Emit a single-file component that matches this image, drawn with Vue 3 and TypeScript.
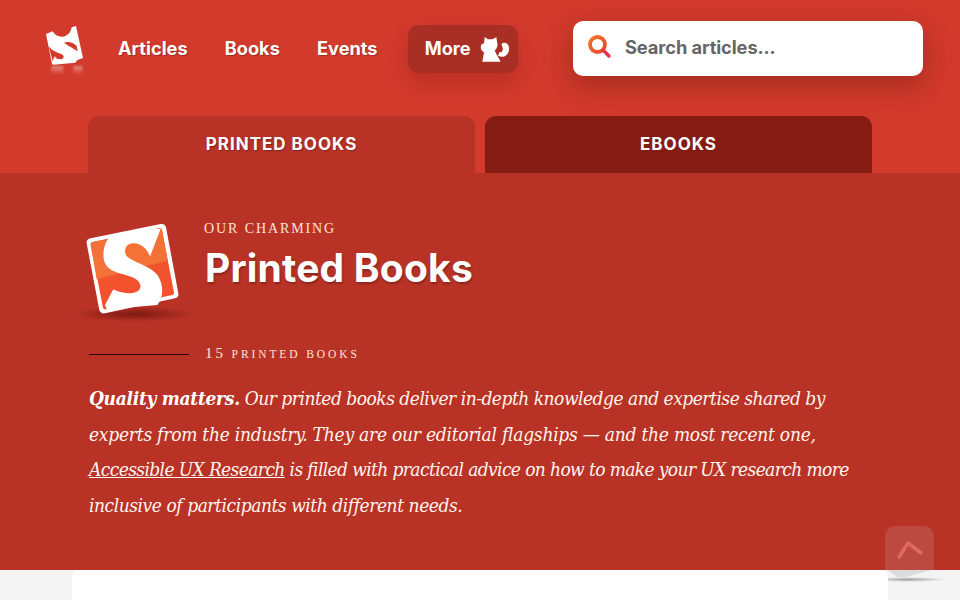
<script setup lang="ts">
const navItems: string[] = ['Articles', 'Books', 'Events']
</script>

<template>
  <div class="page">
    <header class="top">
      <div class="bar">
        <a class="logo" aria-label="Smashing Magazine">
          <svg width="50" height="62" viewBox="0 0 150 186">
            <defs>
              <linearGradient id="fade" x1="0" y1="0" x2="0" y2="1">
                <stop offset="0" stop-color="#fff" stop-opacity=".4" />
                <stop offset="1" stop-color="#fff" stop-opacity="0" />
              </linearGradient>
              <filter id="soft" x="-20%" y="-20%" width="140%" height="140%">
                <feGaussianBlur stdDeviation="2.500" />
              </filter>
            </defs>
            <g filter="url(#soft)">
              <rect x="34" y="132" width="36" height="26" fill="url(#fade)" />
              <rect x="100" y="132" width="28" height="26" fill="url(#fade)" />
            </g>
            <path d="M18 36L38 28C44 40 56 46 70 44C82 41 92 34 95 16L108 12L129 108L112 114L106 122L40 128L36 125Z" fill="#fff" />
            <path d="M72 62C82 58 100 60 110 72L113 88C100 78 84 72 72 62Z" fill="#d23a2c" />
            <path d="M26 72C35 88 55 92 68 98C74 104 70 112 60 112C52 112 46 108 44 102L38 118Z" fill="#d23a2c" />
          </svg>
        </a>
        <nav class="nav">
          <a v-for="item in navItems" :key="item" class="nav-link">{{ item }}</a>
          <a class="more">
            <span>More</span>
            <svg width="30" height="28" viewBox="0 0 90 84">
              <path d="M14 6L24 13H37L49 7L52 25C54 32 50 43 44 47L52 62L62 80H7L12 52C2 48 0 35 5 28L12 25Z" fill="#fff" />
              <path d="M64 28C76 16 90 30 87 45C84 64 68 70 54 62L58 52C66 52 70 46 68 38Z" fill="#fff" />
            </svg>
          </a>
        </nav>
        <div class="search">
          <svg width="24" height="24" viewBox="0 0 24 24">
            <defs>
              <linearGradient id="lens" x1="0" y1="0" x2="1" y2="1">
                <stop offset="0" stop-color="#f0742c" />
                <stop offset="1" stop-color="#e9482f" />
              </linearGradient>
            </defs>
            <circle cx="9.500" cy="9.500" r="7.500" fill="none" stroke="url(#lens)" stroke-width="3.800" />
            <path d="M15.500 15.500l5.500 5.500" stroke="#e8344a" stroke-width="3.500" stroke-linecap="round" />
          </svg>
          <span>Search articles...</span>
        </div>
      </div>
      <div class="tabs">
        <a class="tab active">PRINTED BOOKS</a>
        <a class="tab">EBOOKS</a>
      </div>
    </header>

    <main class="hero">
      <div class="hero-head">
        <div class="badge">
          <svg width="130" height="120" viewBox="0 0 390 360">
            <path d="M62 85L272 42Q285 40 288 52L325 250Q327 262 315 265L105 310Q92 312 88 300L50 100Q48 88 62 85Z" fill="#fff" />
            <path d="M68 96L268 55Q275 54 276 60L312 248Q313 254 307 255L109 298Q101 299 99 293L62 104Q61 98 68 96Z" fill="#f2522e" />
            <path d="M68 96L268 55Q275 54 276 60L293 152L80 208L62 104Q61 98 68 96Z" fill="#f47238" />
            <path d="M118 82L245 58L272 56L240 140C232 118 215 100 190 100C170 100 160 118 168 135C180 155 240 165 264 197C282 228 280 262 262 285L110 298L105 285L130 238C150 250 185 255 205 242C218 230 210 212 190 203C160 190 120 190 105 160C95 135 102 100 118 82Z" fill="#fff" />
          </svg>
        </div>
        <div class="titles">
          <p class="kicker">OUR CHARMING</p>
          <h1>Printed Books</h1>
        </div>
      </div>
      <div class="count">
        <span class="rule"></span>
        <span class="count-text"><b>15</b> PRINTED BOOKS</span>
      </div>
      <p class="intro">
        <span class="line l1"><strong>Quality matters.</strong> Our printed books deliver in-depth knowledge and expertise shared by</span>
        <span class="line l2">experts from the industry. They are our editorial flagships — and the most recent one,</span>
        <span class="line l3"><u>Accessible UX Research</u> is filled with practical advice on how to make your UX research more</span>
        <span class="line">inclusive of participants with different needs.</span>
      </p>
    </main>

    <section class="below"><div class="sheet"></div></section>

    <a class="up" aria-label="Back to top">
      <svg width="28" height="20" viewBox="0 0 28 20">
        <path d="M3 17L12 3L25 13" fill="none" stroke="#de6a5f" stroke-width="3.500" stroke-linecap="round" stroke-linejoin="round" />
      </svg>
    </a>
  </div>
</template>

<style>
html, body { margin: 0; overflow: hidden; }
</style>

<style scoped>
.page {
  position: relative;
  width: 960px;
  height: 600px;
  overflow: hidden;
  background: #f4f4f4;
  font-family: Inter, "Liberation Sans", sans-serif;
  color: #fff;
}
.top {
  height: 173px;
  background: #d23a2c;
  display: flex;
  flex-direction: column;
}
.bar {
  height: 116px;
  display: flex;
  padding: 22px 37px 0 40px;
  box-sizing: border-box;
}
.logo { width: 50px; height: 62px; }
.logo svg { display: block; }
.nav {
  display: flex;
  align-items: flex-start;
  margin-left: 28px;
  margin-top: -1px;
  flex: 1;
}
.nav-link {
  font-size: 18.200px;
  font-weight: 700;
  line-height: 22px;
  margin-top: 16px;
  margin-right: 37.200px;
  text-shadow: 1px 1px 1px rgba(0,0,0,.25);
}
.more {
  display: flex;
  align-items: center;
  gap: 9px;
  width: 110px;
  height: 48px;
  box-sizing: border-box;
  margin-top: 4px;
  margin-left: -7px;
  padding-left: 17px;
  border-radius: 11px;
  background: #a92f24;
  box-shadow: 0 10px 20px rgba(120,20,10,.25);
  font-size: 18.200px;
  font-weight: 700;
}
.more span { position: relative; top: -1px; }
.search {
  width: 350px;
  height: 55px;
  margin-top: -1px;
  box-sizing: border-box;
  display: flex;
  align-items: center;
  gap: 13px;
  padding-left: 15px;
  padding-bottom: 3px;
  background: #fff;
  border-radius: 10px;
  box-shadow: 0 10px 28px rgba(90,20,10,.38);
  color: #666;
  font-size: 18.300px;
  font-weight: 700;
  letter-spacing: -.1px;
}
.tabs {
  display: flex;
  gap: 10px;
  padding-left: 88px;
}
.tab {
  width: 387px;
  height: 57px;
  box-sizing: border-box;
  padding-top: 18px;
  text-align: center;
  border-radius: 11px 11px 0 0;
  background: #841c13;
  font-size: 17px;
  line-height: 21px;
  font-weight: 700;
  letter-spacing: 1px;
}
.tab.active {
  background: #b93226;
  text-shadow: 1px 1px 1px rgba(0,0,0,.3);
}
.hero {
  height: 397px;
  box-sizing: border-box;
  background: #b93226;
  padding: 40px 0 0 89px;
}
.hero-head { display: flex; height: 129px; }
.badge {
  position: relative;
  width: 130px;
  height: 120px;
  margin-left: -19px;
  margin-right: 4px;
  margin-top: -3px;
}
.badge::after {
  content: "";
  position: absolute;
  left: 2px;
  top: 96px;
  width: 124px;
  height: 16px;
  background: radial-gradient(ellipse at center, rgba(105,18,10,.75), rgba(105,18,10,0) 70%);
}
.badge svg { position: relative; z-index: 1; display: block; }
.kicker {
  margin: 8px 0 0;
  font: 400 14px/16px "Liberation Serif", serif;
  letter-spacing: 1.900px;
  color: #fde4d8;
}
h1 {
  margin: 8px 0 0 1px;
  font-size: 39px;
  line-height: 46px;
  font-weight: 700;
  letter-spacing: .2px;
  text-shadow: 1px 2px 2px rgba(0,0,0,.25);
}
.count {
  display: flex;
  align-items: center;
  gap: 16px;
  height: 24px;
}
.rule { width: 100px; height: 1px; background: #2a0805; }
.count-text {
  font: 400 11.500px/16px "Liberation Serif", serif;
  letter-spacing: 2.900px;
  color: #fde4d8;
  margin-bottom: 2px;
}
.count-text b { font-weight: 400; font-size: 15px; }
.intro {
  width: 800px;
  margin: 15px 0 0;
  font: italic 400 19px/35.500px "DejaVu Serif Condensed", "Liberation Serif", serif;
  font-stretch: condensed;
  letter-spacing: -.45px;
  color: #fff5ee;
  white-space: nowrap;
}
.line { display: block; }
.l1 { letter-spacing: -.5px; }
.l2 { letter-spacing: -.24px; }
.l3 { letter-spacing: -.62px; }
.intro strong { font-weight: 700; color: #fff; letter-spacing: -.3px; }
.below {
  height: 30px;
  padding: 0 72px;
}
.sheet { height: 100%; background: #fff; border-radius: 8px 8px 0 0; }
.up {
  position: absolute;
  left: 885px;
  top: 526px;
  width: 49px;
  height: 44px;
  border-radius: 10px 10px 0 0;
  background: #bd4a41;
  display: flex;
  align-items: center;
  justify-content: center;
  padding-top: 4px;
  box-sizing: border-box;
}
.up::before {
  content: "";
  position: absolute;
  left: 3px;
  right: 2px;
  top: 44px;
  height: 7px;
  background: #dcdcdc;
  clip-path: polygon(0 0, 100% 0, 40% 100%, 20% 100%);
}
.up::after {
  content: "";
  position: absolute;
  left: 3px;
  width: 58px;
  top: 51px;
  height: 5px;
  background: radial-gradient(ellipse at 35% 50%, rgba(0,0,0,.35), rgba(0,0,0,0) 70%);
}
</style>
